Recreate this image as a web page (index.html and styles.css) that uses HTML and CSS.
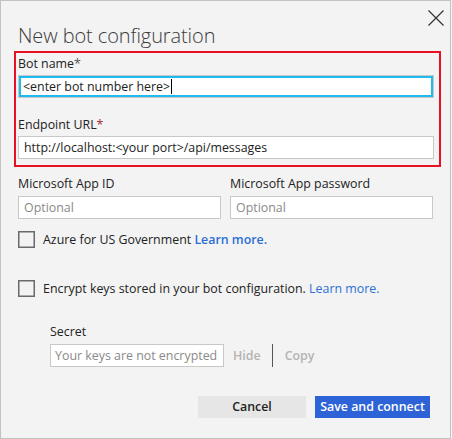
FILE: index.html
```html
<!DOCTYPE html>
<html>
<head>
<meta charset="utf-8">
<link rel="stylesheet" href="styles.css">
</head>
<body>
<div class="dialog">
  <button class="close" aria-label="Close">
    <svg width="16" height="16" viewBox="0 0 16 16"><path d="M0.5 0.5 L15.5 15.5 M15.5 0.5 L0.5 15.5" stroke="#333" stroke-width="1.2" fill="none"/></svg>
  </button>
  <h1 class="title">New bot configuration</h1>
  <div class="required">
    <label class="label">Bot name<span class="ast">*</span></label>
    <div class="input focused">&lt;enter bot number here&gt;<span class="caret"></span></div>
    <label class="label label-gap">Endpoint URL<span class="ast red">*</span></label>
    <div class="input">http://localhost:&lt;your port&gt;/api/messages</div>
  </div>
  <div class="two-col">
    <div class="col">
      <label class="label">Microsoft App ID</label>
      <div class="input placeholder">Optional</div>
    </div>
    <div class="col">
      <label class="label">Microsoft App password</label>
      <div class="input placeholder">Optional</div>
    </div>
  </div>
  <div class="check-row first">
    <span class="checkbox"></span>
    <span class="check-text">Azure for US Government <a class="link bold">Learn more.</a></span>
  </div>
  <div class="check-row second">
    <span class="checkbox"></span>
    <span class="check-text">Encrypt keys stored in your bot configuration. <a class="link">Learn more.</a></span>
  </div>
  <div class="secret">
    <label class="label">Secret</label>
    <div class="secret-row">
      <div class="input placeholder secret-input">Your keys are not encrypted</div>
      <span class="action">Hide</span>
      <span class="sep"></span>
      <span class="action">Copy</span>
    </div>
  </div>
  <div class="buttons">
    <button class="btn cancel">Cancel</button>
    <button class="btn primary">Save and connect</button>
  </div>
</div>
</body>
</html>
```
FILE: styles.css
```css
* { box-sizing: border-box; }
html, body { margin: 0; padding: 0; background: #f3f3f3; }
body {
  width: 452px;
  height: 439px;
  font-family: "Open Sans", "Noto Sans", sans-serif;
  font-size: 12.4px;
  color: #222;
}
.dialog {
  position: relative;
  width: 451px;
  height: 439px;
  border: 1px solid #c2c2c2;
  background: #f3f3f3;
  padding: 0 0 0 17px;
}
.close {
  position: absolute;
  top: 9px;
  left: 427px;
  width: 16px;
  height: 16px;
  padding: 0;
  border: 0;
  background: none;
}
.close svg { display: block; }
.title {
  margin: 0;
  padding-top: 21px;
  height: 50px;
  font-size: 20px;
  font-weight: 300;
  line-height: 28px;
  color: #3c3c3c;
  letter-spacing: -0.1px;
}
.required {
  margin-left: -4px;
  width: 427px;
  border: 2px solid #e81123;
  padding: 2px 5px 6px 2px;
}
.label {
  display: block;
  line-height: 18px;
  height: 18px;
  margin-bottom: 2px;
  white-space: nowrap;
}
.label-gap { margin-top: 18px; }
.ast { color: #555; }
.ast.red { color: #a4262c; }
.input {
  height: 23px;
  background: #fff;
  border: 1px solid #c8c8c8;
  padding: 0 5px;
  line-height: 21px;
  white-space: nowrap;
  overflow: hidden;
}
.focused {
  box-shadow: inset 0 0 0 2px #1ebbee;
  padding-left: 4px;
}
.caret {
  display: inline-block;
  width: 1px;
  height: 15px;
  background: #000;
  vertical-align: -3px;
  margin-left: 1px;
}
.placeholder { color: #8a8a8a; }
.two-col {
  display: flex;
  gap: 9px;
  margin-top: 8px;
  width: 416px;
}
.two-col .col { width: 203px; }
.two-col .label { margin-bottom: 3px; }
.check-row {
  display: flex;
  align-items: center;
  gap: 8px;
  height: 17px;
}
.check-row.first { margin-top: 12px; }
.check-row.second { margin-top: 32px; }
.checkbox {
  width: 17px;
  height: 17px;
  border: 1px solid #6a6a6a;
  flex: none;
  box-shadow: inset 0 0 0 0.5px #6a6a6a;
}
.check-text { white-space: nowrap; line-height: 17px; }
.link { color: #2b6fd6; }
.link.bold { font-weight: 600; }
.secret {
  margin-left: 32px;
  margin-top: 26px;
}
.secret .label { margin-bottom: 3px; }
.secret-row {
  display: flex;
  align-items: center;
  height: 23px;
}
.secret-input { width: 174px; padding-left: 4px; }
.action {
  color: #b4b4b4;
  font-weight: 600;
  margin-left: 9px;
}
.sep {
  width: 1px;
  height: 23px;
  background: #555;
  margin-left: 11px;
  margin-right: 3px;
}
.buttons {
  display: flex;
  gap: 9px;
  margin-top: 29px;
  padding-left: 180px;
}
.btn {
  height: 22px;
  border: 0;
  padding: 0;
  font-family: "Open Sans", "Noto Sans", sans-serif;
  font-size: 12.4px;
  font-weight: 600;
  line-height: 22px;
}
.cancel { width: 108px; background: #e6e6e6; color: #222; }
.primary { width: 115px; background: #2e63d8; color: #fff; }
```
